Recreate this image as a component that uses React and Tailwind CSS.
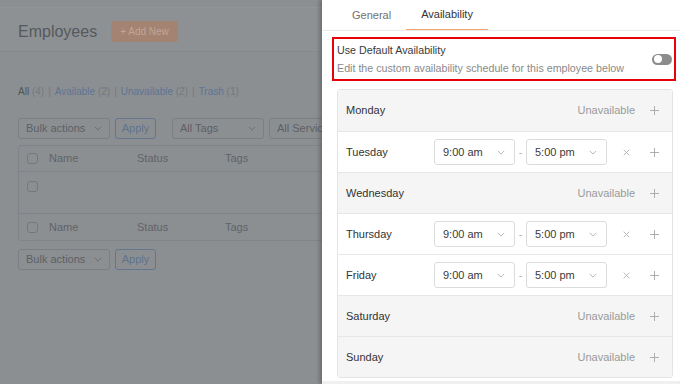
import { useState } from 'react';

const days = [
  { name: 'Monday', on: false },
  { name: 'Tuesday', on: true },
  { name: 'Wednesday', on: false },
  { name: 'Thursday', on: true },
  { name: 'Friday', on: true },
  { name: 'Saturday', on: false },
  { name: 'Sunday', on: false },
];

function Chevron({ className }) {
  return (
    <svg viewBox="0 0 10 6" className={className} fill="none" stroke="currentColor" strokeWidth="1.2">
      <path d="M1 1l4 4 4-4" />
    </svg>
  );
}

function DimSelect({ label, width }) {
  return (
    <div className={`${width} h-[21px] border border-[#7b7f83] rounded-[3px] flex items-center justify-between px-[7px] text-[11px] text-[#5c6065]`}>
      <span>{label}</span>
      <Chevron className="w-[8px] h-[5px] text-[#6a6e72]" />
    </div>
  );
}

function DimApply() {
  return (
    <div className="w-[41px] h-[21px] border border-[#62768e] rounded-[3px] flex items-center justify-center text-[11px] text-[#5f738c]">
      Apply
    </div>
  );
}

function DimCheck() {
  return <div className="w-[11px] h-[11px] border border-[#74787c] rounded-[3px]" />;
}

function TimeSelect({ value }) {
  return (
    <div className="w-[81px] h-[26px] border border-[#dcdcdc] rounded-[3px] bg-white flex items-center justify-between pl-[8px] pr-[9px] text-[11px] text-[#3a3a3a]">
      <span>{value}</span>
      <Chevron className="w-[8px] h-[5px] text-[#b5b5b5]" />
    </div>
  );
}

function Plus() {
  return (
    <svg viewBox="0 0 10 10" className="w-[9px] h-[9px] text-[#a6a6a6]" stroke="currentColor" strokeWidth="1">
      <path d="M5 0v10M0 5h10" />
    </svg>
  );
}

function Cross() {
  return (
    <svg viewBox="0 0 10 10" className="w-[7px] h-[7px] text-[#a6a6a6]" stroke="currentColor" strokeWidth="1.1">
      <path d="M1 1l8 8M9 1l-8 8" />
    </svg>
  );
}

export default function App() {
  const [tab, setTab] = useState('availability');
  const [useDefault, setUseDefault] = useState(false);

  return (
    <div className="relative w-[680px] h-[384px] overflow-hidden bg-[#8c8f92] font-['Liberation_Sans',Arial,sans-serif]">
      {/* dimmed page behind the drawer */}
      <div className="h-[8px] border-b border-[#929598]" />
      <div className="h-[44px] pt-[4px] bg-[#8e9194] border-b border-[#878a8d] flex items-center pl-[18px] gap-[14px]">
        <span className="text-[16px] text-[#55595d]">Employees</span>
        <div className="h-[21px] px-[9px] rounded-[3px] bg-[#a48372] flex items-center text-[10px] text-[#c2a596]">
          + Add New
        </div>
      </div>

      <div className="pl-[18px] pt-[33px] text-[10px] leading-[14px] flex gap-[4px] text-[#74787c]">
        <span><span className="text-[#4f5358]">All</span> (4)</span>
        <span>|</span>
        <span><span className="text-[#5d7492]">Available</span> (2)</span>
        <span>|</span>
        <span><span className="text-[#5d7492]">Unavailable</span> (2)</span>
        <span>|</span>
        <span><span className="text-[#5d7492]">Trash</span> (1)</span>
      </div>

      <div className="pl-[18px] mt-[19px] flex items-center">
        <DimSelect label="Bulk actions" width="w-[92px]" />
        <div className="ml-[5px]"><DimApply /></div>
        <div className="ml-[16px]"><DimSelect label="All Tags" width="w-[92px]" /></div>
        <div className="ml-[5px]"><DimSelect label="All Services" width="w-[92px]" /></div>
      </div>

      <div className="ml-[18px] mt-[6px] w-[320px] border border-[#808387] rounded-[3px] text-[11px] text-[#5f6368]">
        <div className="h-[26px] border-b border-[#808387] flex items-center pl-[8px]">
          <DimCheck />
          <span className="ml-[11px] w-[88px]">Name</span>
          <span className="w-[88px]">Status</span>
          <span>Tags</span>
        </div>
        <div className="h-[42px] border-b border-[#808387] flex items-start pt-[9px] pl-[8px]">
          <DimCheck />
        </div>
        <div className="h-[26px] flex items-center pl-[8px]">
          <DimCheck />
          <span className="ml-[11px] w-[88px]">Name</span>
          <span className="w-[88px]">Status</span>
          <span>Tags</span>
        </div>
      </div>

      <div className="pl-[18px] mt-[8px] flex items-center">
        <DimSelect label="Bulk actions" width="w-[92px]" />
        <div className="ml-[5px]"><DimApply /></div>
      </div>

      {/* drawer */}
      <div className="absolute top-0 right-0 w-[358px] h-full bg-white shadow-[-3px_0_3px_rgba(60,62,65,0.35)] flex flex-col">
        <div className="h-[31px] border-b border-[#ebebeb] flex pl-[15px] text-[11px]">
          <button
            onClick={() => setTab('general')}
            className={`px-[15px] h-full flex items-center ${tab === 'general' ? 'text-[#333] border-b-[1.5px] border-[#f4a36f]' : 'text-[#707070]'}`}
          >
            General
          </button>
          <button
            onClick={() => setTab('availability')}
            className={`px-[15px] h-full flex items-center ${tab === 'availability' ? 'text-[#333] border-b-[1.5px] border-[#f4a36f]' : 'text-[#707070]'}`}
          >
            Availability
          </button>
        </div>

        <div className="ml-[10px] mr-[4px] mt-[6px] h-[44px] border-2 border-[#e8000b] flex items-center justify-between pl-[3px] pr-[2px]">
          <div className="flex flex-col text-[10.7px] leading-[18px]">
            <span className="text-[#3a3a3a]">Use Default Availability</span>
            <span className="text-[#8a8a8a]">Edit the custom availability schedule for this employee below</span>
          </div>
          <button
            onClick={() => setUseDefault(!useDefault)}
            className={`w-[20px] h-[11px] rounded-full flex items-center px-[1.5px] ${useDefault ? 'bg-[#f4a36f] justify-end' : 'bg-[#8c8c8c] justify-start'}`}
          >
            <span className="w-[8px] h-[8px] rounded-full bg-white" />
          </button>
        </div>

        <div className="ml-[15px] mr-[7px] mt-[8px] border border-[#e4e4e4] rounded-[3px] overflow-hidden">
          {days.map((d, i) => (
            <div
              key={d.name}
              className={`h-[41px] flex items-center pl-[8px] pr-[13px] ${i > 0 ? 'border-t border-[#e6e6e6]' : ''} ${d.on ? 'bg-white' : 'bg-[#f5f5f5]'}`}
            >
              <span className="text-[11px] text-[#333] flex-1">{d.name}</span>
              {d.on ? (
                <div className="flex items-center">
                  <TimeSelect value="9:00 am" />
                  <span className="w-[11px] text-center text-[11px] text-[#b0b0b0]">-</span>
                  <TimeSelect value="5:00 pm" />
                  <span className="ml-[16px] mr-[20px] flex"><Cross /></span>
                  <Plus />
                </div>
              ) : (
                <div className="flex items-center">
                  <span className="text-[11px] text-[#9a9a9a] mr-[15px]">Unavailable</span>
                  <Plus />
                </div>
              )}
            </div>
          ))}
        </div>
        <div className="mt-auto h-[3px] bg-[#f0f0f0]" />
      </div>
    </div>
  );
}
